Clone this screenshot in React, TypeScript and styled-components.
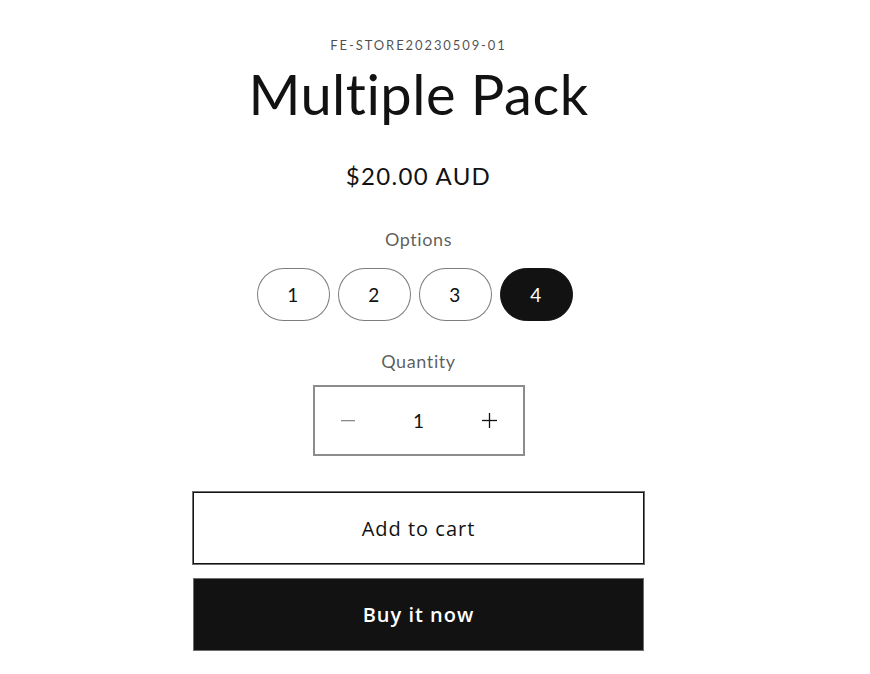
import React, { useState } from "react";
import styled, { createGlobalStyle } from "styled-components";

const GlobalStyle = createGlobalStyle`
  html, body {
    margin: 0;
    padding: 0;
    background: #ffffff;
  }
  body {
    font-family: Lato, "Noto Sans", sans-serif;
    color: #121212;
  }
`;

const options = ["1", "2", "3", "4"];

export default function App() {
  const [selected, setSelected] = useState("4");
  const [quantity, setQuantity] = useState(1);

  return (
    <>
      <GlobalStyle />
      <ProductInfo>
        <Sku>FE-STORE20230509-01</Sku>
        <Title>Multiple Pack</Title>
        <Price>$20.00 AUD</Price>

        <FieldLabel>Options</FieldLabel>
        <PillRow>
          {options.map((o) => (
            <Pill key={o} $active={o === selected} onClick={() => setSelected(o)}>
              {o}
            </Pill>
          ))}
        </PillRow>

        <FieldLabel $top={28}>Quantity</FieldLabel>
        <QuantityBox>
          <QtyButton onClick={() => setQuantity(Math.max(1, quantity - 1))}>
            <svg width="14" height="2" viewBox="0 0 14 2">
              <rect width="14" height="1.3" fill="#8a8a8a" />
            </svg>
          </QtyButton>
          <QtyValue>{quantity}</QtyValue>
          <QtyButton onClick={() => setQuantity(quantity + 1)}>
            <svg width="15" height="15" viewBox="0 0 15 15">
              <rect x="0" y="6.85" width="15" height="1.3" fill="#121212" />
              <rect x="6.85" y="0" width="1.3" height="15" fill="#121212" />
            </svg>
          </QtyButton>
        </QuantityBox>

        <Buttons>
          <CartButton>Add to cart</CartButton>
          <BuyButton>Buy it now</BuyButton>
        </Buttons>
      </ProductInfo>
    </>
  );
}

const ProductInfo = styled.div`
  width: 451px;
  margin-left: 193px;
  padding-top: 36px;
  display: flex;
  flex-direction: column;
  align-items: center;
  text-align: center;
`;

const Sku = styled.p`
  margin: 0;
  font-size: 13px;
  line-height: 18px;
  letter-spacing: 1.9px;
  color: rgba(18, 18, 18, 0.75);
`;

const Title = styled.h1`
  margin: 6px 0 0;
  font-weight: 400;
  font-size: 56px;
  line-height: 68px;
  letter-spacing: 0.5px;
  color: #121212;
`;

const Price = styled.div`
  margin-top: 31px;
  font-size: 24px;
  line-height: 34px;
  letter-spacing: 1.3px;
  color: #121212;
`;

const FieldLabel = styled.div<{ $top?: number }>`
  margin-top: ${({ $top }) => $top ?? 34}px;
  font-size: 18px;
  line-height: 24px;
  letter-spacing: 0.6px;
  color: rgba(18, 18, 18, 0.7);
`;

const PillRow = styled.div`
  display: flex;
  gap: 8px;
  margin-top: 17px;
  padding-right: 8px;
`;

const Pill = styled.button<{ $active: boolean }>`
  width: 73px;
  height: 53px;
  border-radius: 27px;
  border: 1px solid ${({ $active }) => ($active ? "#121212" : "rgba(18,18,18,0.55)")};
  background: ${({ $active }) => ($active ? "#121212" : "#ffffff")};
  color: ${({ $active }) => ($active ? "#ffffff" : "#121212")};
  font-family: Lato, "Noto Sans", sans-serif;
  font-size: 19px;
  letter-spacing: 0.6px;
  padding: 0;
  cursor: pointer;
`;

const QuantityBox = styled.div`
  margin-top: 12px;
  width: 212px;
  height: 71px;
  box-sizing: border-box;
  border: 2px solid #8c8c8c;
  display: grid;
  grid-template-columns: 66px 1fr 66px;
  align-items: center;
`;

const QtyButton = styled.button`
  height: 100%;
  border: none;
  background: transparent;
  display: flex;
  align-items: center;
  justify-content: center;
  padding: 0;
  cursor: pointer;
`;

const QtyValue = styled.span`
  font-size: 19px;
  color: #121212;
`;

const Buttons = styled.div`
  margin-top: 36px;
  width: 100%;
  display: flex;
  flex-direction: column;
  gap: 14px;
`;

const BaseButton = styled.button`
  width: 100%;
  height: 72px;
  box-sizing: border-box;
  font-family: "Open Sans", "Noto Sans", sans-serif;
  font-size: 20px;
  letter-spacing: 1px;
  cursor: pointer;
`;

const CartButton = styled(BaseButton)`
  background: #ffffff;
  color: #121212;
  border: 1px solid #121212;
  box-shadow: 0 0 0 1px #6e6e6e;
`;

const BuyButton = styled(BaseButton)`
  height: 73px;
  background: #121212;
  color: #ffffff;
  font-weight: 600;
  border: 1px solid #6e6e6e;
`;
